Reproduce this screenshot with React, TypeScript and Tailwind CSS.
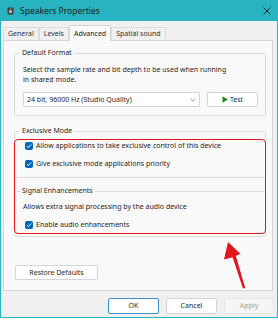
import React from "react";

const font = { fontFamily: '"Noto Sans", "Open Sans", sans-serif' };

function Check({ label }: { label: string }) {
  return (
    <div className="flex items-center h-[10px] gap-[3px]">
      <span className="w-[8px] h-[8px] rounded-[2px] bg-[#0067c0] flex items-center justify-center">
        <svg width="6" height="6" viewBox="0 0 10 10">
          <path d="M1.5 5.2 L4 7.6 L8.6 2.4" fill="none" stroke="#fff" strokeWidth="1.6" />
        </svg>
      </span>
      <span>{label}</span>
    </div>
  );
}

function Tab({ label, active }: { label: string; active?: boolean }) {
  return active ? (
    <div className="relative z-10 h-[16px] -mb-px px-[4px] bg-[#f9f9f9] border border-b-0 border-[#d6d6d6] flex items-center text-[#1a1a1a]">
      {label}
    </div>
  ) : (
    <div className="h-[13px] px-[4px] border border-b-0 border-[#dcdcdc] flex items-center text-[#333] bg-[#f0f0f0]">
      {label}
    </div>
  );
}

export default function App() {
  return (
    <div className="relative w-[278px] h-[320px] bg-white text-[7px] leading-[10px] text-[#1f1f1f]" style={font}>
      <div className="h-[318px] flex flex-col bg-[#f0f0f0] border border-t-0 border-[#27b3bf]">
        {/* title bar */}
        <div className="h-[21px] bg-[#27b3bf] flex items-center -mx-px px-[7px] shrink-0">
          <svg width="7" height="8" viewBox="0 0 7 8">
            <rect x="0.5" y="0.5" width="6" height="7" rx="1" fill="#3c3c3c" />
            <circle cx="3.5" cy="4.6" r="1.6" fill="#bdbdbd" />
            <circle cx="3.5" cy="1.9" r="0.6" fill="#bdbdbd" />
          </svg>
          <span className="ml-[6px] text-[8.5px] text-[#1a1a1a]">Speakers Properties</span>
          <svg className="ml-auto" width="8" height="8" viewBox="0 0 8 8">
            <path d="M0.5 0.5 L7.5 7.5 M7.5 0.5 L0.5 7.5" stroke="#1a1a1a" strokeWidth="0.9" />
          </svg>
        </div>

        {/* tabs */}
        <div className="flex items-end pt-[4px] pl-[2px] h-[19px] shrink-0">
          <Tab label="General" />
          <Tab label="Levels" />
          <Tab label="Advanced" active />
          <Tab label="Spatial sound" />
        </div>

        {/* panel */}
        <div className="ml-[2px] w-[270px] h-[251px] bg-[#f9f9f9] border border-[#d6d6d6] flex flex-col px-[10px]">
          <fieldset className="mt-[7px] w-[252px] border border-[#dcdcdc] rounded-[2px] pl-[8px] pb-[8px]">
            <legend className="ml-[-3px] px-[2px]">Default Format</legend>
            <p className="mt-[7px]">Select the sample rate and bit depth to be used when running</p>
            <p>in shared mode.</p>
            <div className="mt-[7px] flex gap-[7px]">
              <div className="w-[177px] h-[15px] bg-white border border-[#d4d4d4] rounded-[2px] flex items-center px-[3px]">
                <span>24 bit, 96000 Hz (Studio Quality)</span>
                <svg className="ml-auto" width="6" height="4" viewBox="0 0 6 4">
                  <path d="M0.5 0.8 L3 3.2 L5.5 0.8" fill="none" stroke="#666" strokeWidth="0.7" />
                </svg>
              </div>
              <div className="w-[51px] h-[15px] bg-white border border-[#d4d4d4] rounded-[2px] flex items-center justify-center gap-[2px]">
                <svg width="6" height="7" viewBox="0 0 6 7">
                  <path d="M0.5 0.3 L5.8 3.5 L0.5 6.7 Z" fill="#188a1c" />
                </svg>
                <span>Test</span>
              </div>
            </div>
          </fieldset>

          <fieldset className="mt-[10px] w-[252px] border border-[#dcdcdc] rounded-[2px] pl-[10px] pb-[8px]">
            <legend className="ml-[-5px] px-[2px]">Exclusive Mode</legend>
            <div className="mt-[5px] flex flex-col gap-[8px]">
              <Check label="Allow applications to take exclusive control of this device" />
              <Check label="Give exclusive mode applications priority" />
            </div>
          </fieldset>

          <fieldset className="mt-[8px] w-[252px] border border-[#dcdcdc] rounded-[2px] pl-[8px] pb-[6px]">
            <legend className="ml-[-3px] px-[2px]">Signal Enhancements</legend>
            <p className="mt-[6px]">Allows extra signal processing by the audio device</p>
            <div className="mt-[8px] pl-[2px]">
              <Check label="Enable audio enhancements" />
            </div>
          </fieldset>

          <button className="mt-[28px] ml-px w-[83px] h-[15px] bg-white border border-[#d4d4d4] rounded-[2px] text-[7px] leading-[10px]">
            Restore Defaults
          </button>
        </div>

        {/* footer */}
        <div className="mt-[7px] flex gap-[7px] pl-[107px]">
          <button className="w-[51px] h-[16px] bg-white border border-[#3f8fd0] rounded-[2px] text-[7px] leading-[10px]">OK</button>
          <button className="w-[51px] h-[16px] bg-white border border-[#d4d4d4] rounded-[2px] text-[7px] leading-[10px]">Cancel</button>
          <button className="w-[50px] h-[16px] bg-[#f5f5f5] border border-[#e6e6e6] rounded-[2px] text-[7px] leading-[10px] text-[#a3a3a3]">Apply</button>
        </div>
      </div>

      {/* annotation */}
      <div className="absolute left-[14px] top-[139px] w-[252px] h-[95px] border-[1.5px] border-[#e3141b] rounded-[4px]" />
      <svg className="absolute left-[220px] top-[238px]" width="30" height="55" viewBox="0 0 30 55">
        <path d="M8 4 L20.5 16 L15.8 17.8 L25.2 50 L23 50.6 L12.6 19.2 L4 21.5 Z" fill="#e3141b" />
      </svg>
    </div>
  );
}
